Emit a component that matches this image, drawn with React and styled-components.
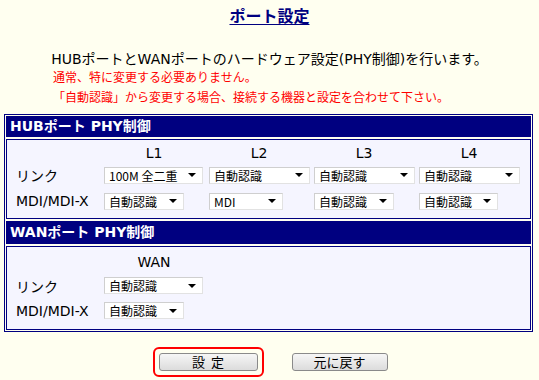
import React from 'react'
import styled, { createGlobalStyle } from 'styled-components'

const NAVY = '#000080'
const IVORY = '#FFFFF0'
const CELL = '#F5F5FF'
const RED = '#FF0000'

const GlobalStyle = createGlobalStyle`
    body {
        margin: 0;
        background: ${IVORY};
        font-family: "DejaVu Sans", "Noto Sans CJK JP", sans-serif;
        color: #000;
    }
`

const Page = styled.div`
    width: 539px;
    height: 380px;
    overflow: hidden;
`
const Title = styled.div`
    text-align: center;
    padding-top: 6px;
    height: 24px;
    a {
        color: ${NAVY};
        font-size: 16px;
        font-weight: 700;
        line-height: 22px;
        text-decoration: underline;
        text-underline-offset: 2px;
    }
`
const Lead = styled.p`
    margin: 20px 0 0;
    text-align: center;
    font-size: 14px;
    line-height: 18px;
`
const Notes = styled.div`
    margin-top: 0;
    padding-left: 53px;
    color: ${RED};
    font-size: 12px;
    line-height: 20px;
`
const Panel = styled.div`
    margin: 6px 6px 0 4px;
    border: 1px solid ${NAVY};
    padding: 1px;
    display: flex;
    flex-direction: column;
    gap: 2px;
`
const Header = styled.div`
    height: ${p => p.h}px;
    background: ${NAVY};
    color: #fff;
    font-size: 14px;
    font-weight: 700;
    line-height: ${p => p.h}px;
    padding-left: 4px;
`
const Body = styled.div`
    border: 1px solid ${NAVY};
    background: ${CELL};
    padding: 4px 0 ${p => p.pb}px 9px;
`
const Grid = styled.div`
    display: grid;
    grid-template-columns: 88px repeat(${p => p.cols}, 105px);
    grid-template-rows: ${p => p.head}px repeat(2, ${p => p.row}px);
    align-items: center;
`
const ColHead = styled.div`
    width: 100px;
    text-align: center;
    font-size: 14px;
`
const RowLabel = styled.div`
    font-size: 14px;
    white-space: nowrap;
`
const Select = styled.div`
    width: ${p => p.w}px;
    height: 17px;
    box-sizing: border-box;
    border: 1px solid #cfcfcf;
    border-right-color: #e2e2e2;
    border-bottom-color: #e2e2e2;
    background: #fff;
    display: flex;
    align-items: center;
    justify-content: space-between;
    padding: 0 6px 0 4px;
    font-family: "Noto Sans CJK JP", sans-serif;
    font-size: 12px;
    line-height: 15px;
    white-space: nowrap;
`
const Arrow = styled.span`
    width: 0;
    height: 0;
    border-left: 4px solid transparent;
    border-right: 4px solid transparent;
    border-top: 4px solid #000;
`
const Buttons = styled.div`
    margin-top: 15px;
    display: flex;
    justify-content: center;
    align-items: center;
    gap: 28px;
    padding-left: 1px;
`
const Focus = styled.div`
    border: 2px solid ${RED};
    border-radius: 6px;
    padding: 4px;
    display: flex;
`
const Button = styled.button`
    width: ${p => p.w}px;
    height: 18px;
    box-sizing: border-box;
    border: 1px solid #8a8a8a;
    border-radius: 3px;
    background: linear-gradient(#f6f6f6, #dcdcdc);
    font-family: "Noto Sans CJK JP", sans-serif;
    font-size: 13px;
    line-height: 16px;
    padding: 0;
    color: #000;
    white-space: pre;
`

const Drop = ({ w, children }) => (
    <Select w={w}>
        <span>{children}</span>
        <Arrow />
    </Select>
)

const hubLink = ['100M 全二重', '自動認識', '自動認識', '自動認識']
const hubMdi = [['自動認識', 80], ['MDI', 74], ['自動認識', 80], ['自動認識', 79]]

export default function App() {
    return (
        <Page>
            <GlobalStyle />
            <Title><a>ポート設定</a></Title>
            <Lead>HUBポートとWANポートのハードウェア設定(PHY制御)を行います。</Lead>
            <Notes>
                <div>通常、特に変更する必要ありません。</div>
                <div>「自動認識」から変更する場合、接続する機器と設定を合わせて下さい。</div>
            </Notes>
            <Panel>
                <Header h={21}>HUBポート PHY制御</Header>
                <Body pb={4}>
                    <Grid cols={4} head={18} row={26}>
                        <div />
                        {['L1', 'L2', 'L3', 'L4'].map(l => <ColHead key={l}>{l}</ColHead>)}
                        <RowLabel>リンク</RowLabel>
                        {hubLink.map((v, i) => <Drop key={i} w={i === 0 ? 99 : 101}>{v}</Drop>)}
                        <RowLabel>MDI/MDI-X</RowLabel>
                        {hubMdi.map(([v, w], i) => <Drop key={i} w={w}>{v}</Drop>)}
                    </Grid>
                </Body>
                <Header h={23}>WANポート PHY制御</Header>
                <Body pb={6}>
                    <Grid cols={1} head={22} row={25}>
                        <div />
                        <ColHead>WAN</ColHead>
                        <RowLabel>リンク</RowLabel>
                        <Drop w={99}>自動認識</Drop>
                        <RowLabel>MDI/MDI-X</RowLabel>
                        <Drop w={80}>自動認識</Drop>
                    </Grid>
                </Body>
            </Panel>
            <Buttons>
                <Focus>
                    <Button w={99}>設  定</Button>
                </Focus>
                <Button w={96}>元に戻す</Button>
            </Buttons>
        </Page>
    )
}
